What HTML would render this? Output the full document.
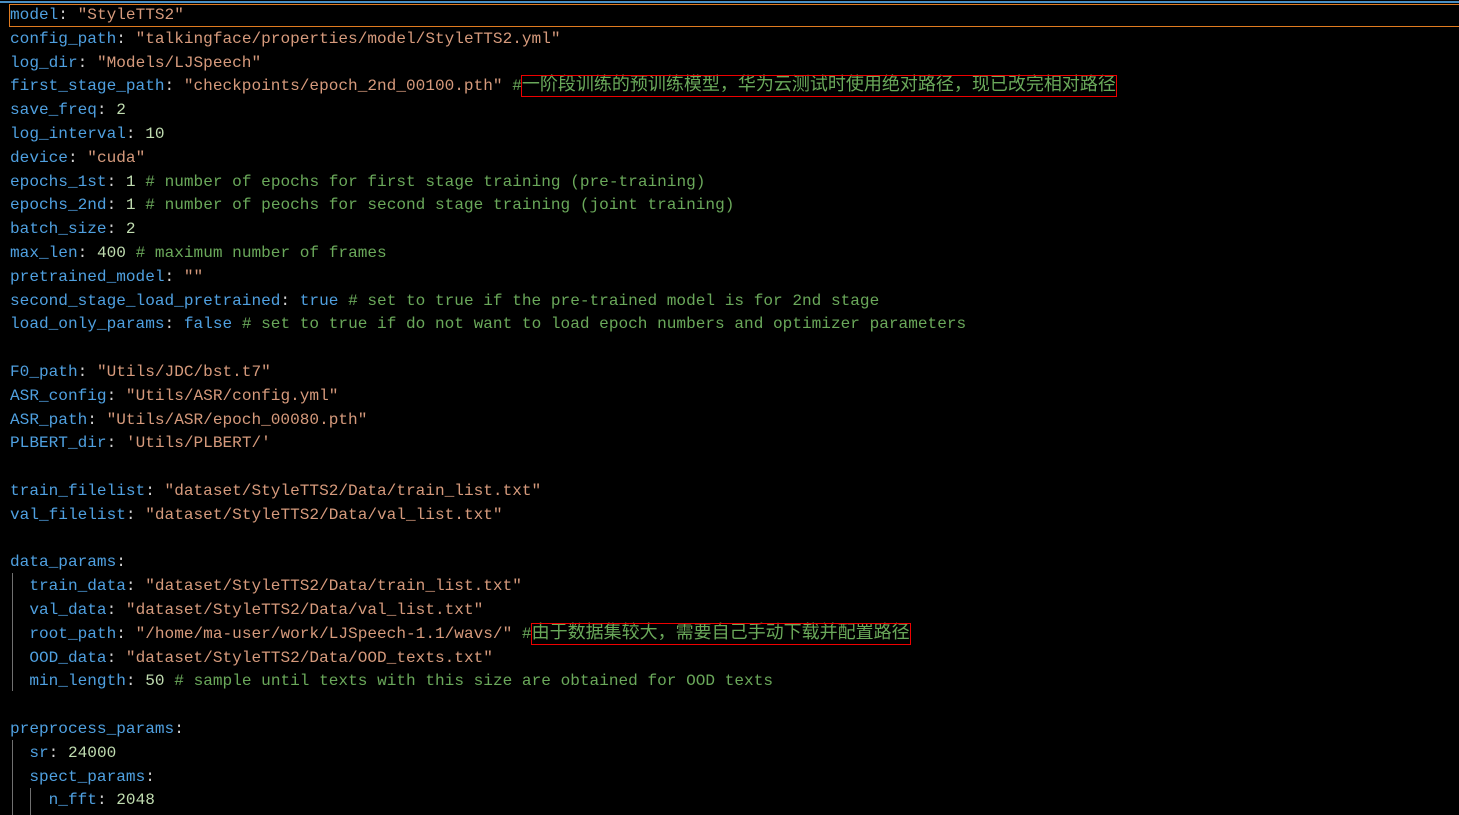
<!DOCTYPE html>
<html><head><meta charset="utf-8"><style>
html,body{margin:0;padding:0;background:#000;width:1459px;height:815px;overflow:hidden}
body{position:relative;font-family:"Liberation Mono",monospace;font-size:16.1px;color:#d4d4d4}
.top{position:absolute;left:0;top:1px;width:1459px;height:2px;background:#4a8fc4}
.cur{position:absolute;left:9px;top:4px;width:1460px;height:23px;border:1px solid #e07b20;border-right:none;box-sizing:border-box}
.code{position:absolute;left:10px;top:4px}
.l{height:23.8px;line-height:23.8px;white-space:pre}
.k{color:#4fa0e0}.s{color:#d69a7c}.n{color:#c0dcb0}.c{color:#6aa85a}.p{color:#d4d4d4}
.z{font-family:"Liberation Mono","Noto Sans CJK SC",monospace;font-size:18px;outline:1px solid #e00;outline-offset:0}
.g{position:absolute;width:1px;background:#707070}
</style></head><body>
<div class="top"></div><div class="cur"></div>
<div class="g" style="left:12px;top:573px;height:118px"></div>
<div class="g" style="left:12px;top:740px;height:75px"></div>
<div class="g" style="left:30px;top:788px;height:27px"></div>
<div class="code">
<div class="l"><span class="k">model</span>: <span class="s">"StyleTTS2"</span></div>
<div class="l"><span class="k">config_path</span>: <span class="s">"talkingface/properties/model/StyleTTS2.yml"</span></div>
<div class="l"><span class="k">log_dir</span>: <span class="s">"Models/LJSpeech"</span></div>
<div class="l"><span class="k">first_stage_path</span>: <span class="s">"checkpoints/epoch_2nd_00100.pth"</span> <span class="c">#<span class="z">一阶段训练的预训练模型，华为云测试时使用绝对路径，现已改完相对路径</span></span></div>
<div class="l"><span class="k">save_freq</span>: <span class="n">2</span></div>
<div class="l"><span class="k">log_interval</span>: <span class="n">10</span></div>
<div class="l"><span class="k">device</span>: <span class="s">"cuda"</span></div>
<div class="l"><span class="k">epochs_1st</span>: <span class="n">1</span> <span class="c"># number of epochs for first stage training (pre-training)</span></div>
<div class="l"><span class="k">epochs_2nd</span>: <span class="n">1</span> <span class="c"># number of peochs for second stage training (joint training)</span></div>
<div class="l"><span class="k">batch_size</span>: <span class="n">2</span></div>
<div class="l"><span class="k">max_len</span>: <span class="n">400</span> <span class="c"># maximum number of frames</span></div>
<div class="l"><span class="k">pretrained_model</span>: <span class="s">""</span></div>
<div class="l"><span class="k">second_stage_load_pretrained</span>: <span class="k">true</span> <span class="c"># set to true if the pre-trained model is for 2nd stage</span></div>
<div class="l"><span class="k">load_only_params</span>: <span class="k">false</span> <span class="c"># set to true if do not want to load epoch numbers and optimizer parameters</span></div>
<div class="l"> </div>
<div class="l"><span class="k">F0_path</span>: <span class="s">"Utils/JDC/bst.t7"</span></div>
<div class="l"><span class="k">ASR_config</span>: <span class="s">"Utils/ASR/config.yml"</span></div>
<div class="l"><span class="k">ASR_path</span>: <span class="s">"Utils/ASR/epoch_00080.pth"</span></div>
<div class="l"><span class="k">PLBERT_dir</span>: <span class="s">'Utils/PLBERT/'</span></div>
<div class="l"> </div>
<div class="l"><span class="k">train_filelist</span>: <span class="s">"dataset/StyleTTS2/Data/train_list.txt"</span></div>
<div class="l"><span class="k">val_filelist</span>: <span class="s">"dataset/StyleTTS2/Data/val_list.txt"</span></div>
<div class="l"> </div>
<div class="l"><span class="k">data_params</span>:</div>
<div class="l">  <span class="k">train_data</span>: <span class="s">"dataset/StyleTTS2/Data/train_list.txt"</span></div>
<div class="l">  <span class="k">val_data</span>: <span class="s">"dataset/StyleTTS2/Data/val_list.txt"</span></div>
<div class="l">  <span class="k">root_path</span>: <span class="s">"/home/ma-user/work/LJSpeech-1.1/wavs/"</span> <span class="c">#<span class="z">由于数据集较大，需要自己手动下载并配置路径</span></span></div>
<div class="l">  <span class="k">OOD_data</span>: <span class="s">"dataset/StyleTTS2/Data/OOD_texts.txt"</span></div>
<div class="l">  <span class="k">min_length</span>: <span class="n">50</span> <span class="c"># sample until texts with this size are obtained for OOD texts</span></div>
<div class="l"> </div>
<div class="l"><span class="k">preprocess_params</span>:</div>
<div class="l">  <span class="k">sr</span>: <span class="n">24000</span></div>
<div class="l">  <span class="k">spect_params</span>:</div>
<div class="l">    <span class="k">n_fft</span>: <span class="n">2048</span></div>
</div>
</body></html>
